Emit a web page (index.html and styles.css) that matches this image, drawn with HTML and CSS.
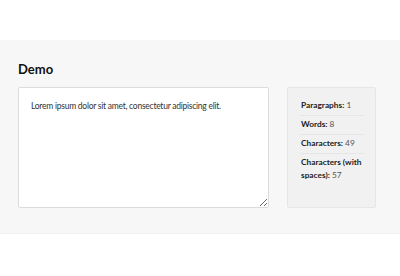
FILE: index.html
```html
<!DOCTYPE html>
<html lang="en">
<head>
    <meta charset="UTF-8">
    <meta name="viewport" content="width=device-width, initial-scale=1.0">
    <title>Word Count Demo</title>
    <link rel="stylesheet" href="styles.css">
</head>
<body>
<div class="section">
    <h2 class="title">Demo</h2>
    <div class="row">
        <textarea class="editor" spellcheck="true">Lorem ipsum dolor sit amet, consectetur adipiscing elit.</textarea>
        <ul class="stats">
            <li><b>Paragraphs:</b> 1</li>
            <li><b>Words:</b> 8</li>
            <li><b>Characters:</b> 49</li>
            <li><b>Characters (with spaces):</b> 57</li>
        </ul>
    </div>
</div>
</body>
</html>
```

FILE: styles.css
```css
body {
    margin: 0;
    padding: 0;
    background-color: #fff;
    font-family: "Lato", "Liberation Sans", sans-serif;
}

/* 灰色区块 */
.section {
    margin-top: 40px;
    background-color: #f7f7f7;
    padding: 24px 18px 25px 18px;
    border-bottom: 1px solid #f0f0f0;
}
.title {
    margin: 0 0 12px 0;
    font-size: 13px;
    font-weight: bold;
    color: #111;
    line-height: 11px;
}
.row {
    display: flex;
    align-items: stretch;
    gap: 18px;
}

/* 输入框 */
.editor {
    width: 251px;
    height: 121px;
    box-sizing: border-box;
    margin: 0;
    padding: 12px 12px;
    border: 1px solid #dcdcdc;
    border-radius: 2px;
    background-color: #fff;
    font-family: inherit;
    font-size: 8.5px;
    letter-spacing: -0.25px;
    line-height: 13px;
    color: #333;
    resize: both;
}

/* 统计 */
.stats {
    width: 89px;
    box-sizing: border-box;
    margin: 0;
    padding: 9px 11px 0 12px;
    list-style: none;
    background-color: #f1f1f1;
    border: 1px solid #e6e6e6;
    border-radius: 2px;
    font-size: 8.3px;
    color: #555;
}
.stats li {
    padding: 2px 0 3px 1px;
    line-height: 13px;
    border-bottom: 1px solid #e6e6e6;
}
.stats li:last-child {
    border-bottom: none;
}
.stats b {
    color: #222;
}
```
